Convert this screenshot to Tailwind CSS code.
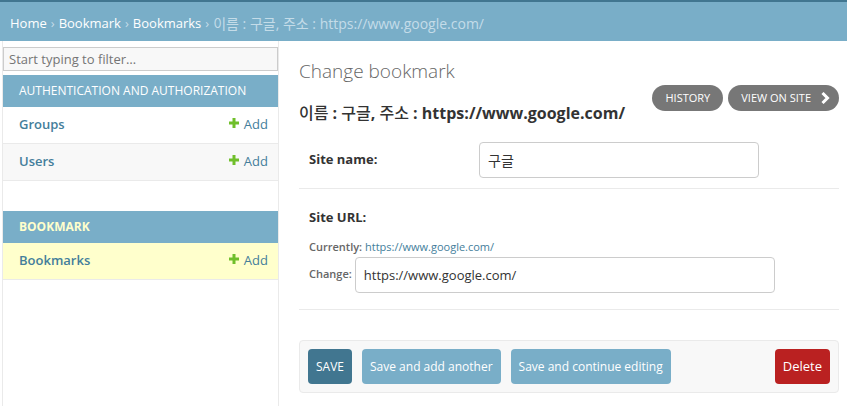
<!DOCTYPE html>
<html lang="ko">
<head>
<meta charset="utf-8">
<meta name="viewport" content="width=device-width, initial-scale=1">
<title>Change bookmark</title>
<script src="https://cdn.jsdelivr.net/npm/@tailwindcss/browser@4"></script>
</head>
<body class="flex min-h-screen flex-col overflow-x-hidden bg-white font-['Open_Sans','Noto_Sans_CJK_KR',sans-serif] text-[13px] text-[#333]">
<nav aria-label="Breadcrumbs" class="flex h-[41px] shrink-0 items-center gap-1 border-t-2 border-[#417690] bg-[#79aec8] px-[10px] pt-1 text-[#c4dce8]">
  <a href="#" class="font-medium text-white">Home</a><span>›</span>
  <a href="#" class="font-medium text-white">Bookmark</a><span>›</span>
  <a href="#" class="font-medium text-white">Bookmarks</a><span>›</span>
  <span class="text-sm">이름 : 구글, 주소 : https://www.google.com/</span>
</nav>
<div class="flex grow">
  <aside class="ml-[2px] w-[277px] shrink-0 border-x border-[#eaeaea]">
    <input type="text" aria-label="Filter navigation items" placeholder="Start typing to filter…" class="mt-[6px] mb-1 block h-6 w-full border border-[#ccc] bg-[#f8f8f8] px-[5px] text-[13px] placeholder:text-[#757575]">
    <section class="mb-[30px]">
      <h2 class="flex h-8 items-center bg-[#79aec8] px-4 text-xs font-medium text-white"><a href="#">AUTHENTICATION AND AUTHORIZATION</a></h2>
      <table class="w-full border-separate border-spacing-0">
        <tr class="h-[37px]">
          <th class="border-b border-[#eaeaea] pl-4 text-left font-semibold text-[#447e9b]"><a href="#">Groups</a></th>
          <td class="border-b border-[#eaeaea] pr-[10px] text-[#447e9b]"><a href="#" class="flex items-center justify-end gap-1"><svg class="mb-1 size-3" viewBox="0 0 12 12" fill="#70bf2b"><path d="M4.500 1h3v3.500H11v3H7.500V11h-3V7.500H1v-3h3.500z"/></svg>Add</a></td>
        </tr>
        <tr class="h-[37px] bg-[#f8f8f8]">
          <th class="border-b border-[#eaeaea] pl-4 text-left font-semibold text-[#447e9b]"><a href="#">Users</a></th>
          <td class="border-b border-[#eaeaea] pr-[10px] text-[#447e9b]"><a href="#" class="flex items-center justify-end gap-1"><svg class="mb-1 size-3" viewBox="0 0 12 12" fill="#70bf2b"><path d="M4.500 1h3v3.500H11v3H7.500V11h-3V7.500H1v-3h3.500z"/></svg>Add</a></td>
        </tr>
      </table>
    </section>
    <section>
      <h2 class="flex h-8 items-center bg-[#79aec8] px-4 text-xs font-bold text-[#ffc]"><a href="#">BOOKMARK</a></h2>
      <table class="w-full border-separate border-spacing-0">
        <tr class="h-[37px] bg-[#ffc]">
          <th class="border-b border-[#eaeaea] pl-4 text-left font-semibold text-[#447e9b]"><a href="#">Bookmarks</a></th>
          <td class="border-b border-[#eaeaea] pr-[10px] text-[#447e9b]"><a href="#" class="flex items-center justify-end gap-1"><svg class="mb-1 size-3" viewBox="0 0 12 12" fill="#70bf2b"><path d="M4.500 1h3v3.500H11v3H7.500V11h-3V7.500H1v-3h3.500z"/></svg>Add</a></td>
        </tr>
      </table>
    </section>
  </aside>
  <main class="min-w-0 grow pt-[18px] pr-2 pb-3 pl-5">
    <h1 class="text-[19px] leading-6 font-light text-[#666]">Change bookmark</h1>
    <div class="flex items-start justify-between pt-[2px]">
      <h2 class="pt-4 pb-[2px] text-base leading-6 font-bold"><span class="font-medium">이름</span> : <span class="font-medium">구글</span>, <span class="font-medium">주소</span> : https://www.google.com/</h2>
      <div class="flex gap-[5px] text-[11px] text-white">
        <a href="#" class="flex h-[26px] items-center rounded-full bg-[#777] px-[13px]">HISTORY</a>
        <a href="#" class="flex h-[26px] items-center gap-[10px] rounded-full bg-[#777] pr-[9px] pl-[13px]">VIEW ON SITE<svg class="h-3 w-[9px]" viewBox="0 0 9 12" fill="none" stroke="#fff" stroke-width="3"><path d="M1.500 1l5 5-5 5"/></svg></a>
      </div>
    </div>
    <form>
      <div class="mt-[5px] flex items-center border-b border-[#eaeaea] px-[10px] py-[10px]">
        <label for="name" class="w-[170px] shrink-0 font-bold">Site name:</label>
        <input id="name" type="text" value="구글" class="h-9 w-[280px] rounded border border-[#ccc] px-2 text-sm">
      </div>
      <div class="border-b border-[#eaeaea] px-[10px] pt-[18px] pb-4">
        <label for="url" class="block leading-5 font-bold">Site URL:</label>
        <p class="mt-3 text-[11px] leading-4 text-[#666]"><span class="font-semibold">Currently:</span> <a href="#" class="text-[#447e9b]">https://www.google.com/</a></p>
        <div class="mt-[2px] flex items-center gap-[3px]">
          <label for="url" class="pb-[2px] text-[11px] font-semibold text-[#666]">Change:</label>
          <input id="url" type="url" value="https://www.google.com/" class="h-9 w-[420px] rounded border border-[#ccc] px-2">
        </div>
      </div>
      <div class="mt-[30px] flex gap-[10px] rounded border border-[#eaeaea] bg-[#f8f8f8] p-2 text-xs text-white">
        <button type="submit" class="h-[35px] rounded bg-[#417690] px-2">SAVE</button>
        <button type="submit" class="h-[35px] rounded bg-[#79aec8] px-2">Save and add another</button>
        <button type="submit" class="h-[35px] rounded bg-[#79aec8] px-2">Save and continue editing</button>
        <a href="#" class="ml-auto flex h-[35px] items-center rounded bg-[#ba2121] px-2 text-[13px]">Delete</a>
      </div>
    </form>
  </main>
</div>
</body>
</html>
